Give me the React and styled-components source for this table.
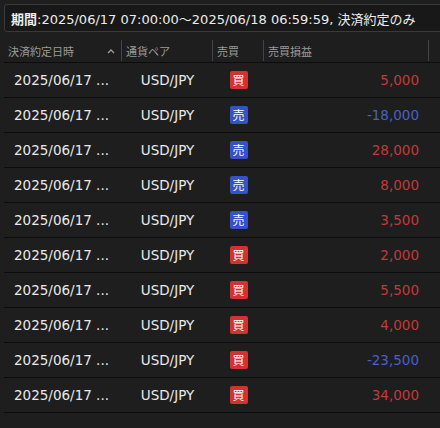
import React from "react";
import styled, { createGlobalStyle } from "styled-components";

const Global = createGlobalStyle`
  html, body { margin: 0; padding: 0; background: #1e1e1e; }
  body { font-family: "DejaVu Sans", "Noto Sans CJK JP", sans-serif; overflow: hidden; }
`;

const Page = styled.div`
  width: 440px;
  height: 428px;
  background: #1e1e1e;
  padding: 4px 0 0 4px;
  box-sizing: border-box;
  overflow: hidden;
`;

const FilterBox = styled.div`
  width: 446px;
  height: 28px;
  box-sizing: border-box;
  border: 1px solid #3a3a3a;
  border-radius: 3px;
  background: #181818;
  color: #ececec;
  font-size: 13px;
  display: flex;
  align-items: center;
  padding-left: 6px;
  white-space: nowrap;
`;

const Label = styled.span`
  font-weight: 700;
  font-family: "Noto Sans CJK JP", sans-serif;
`;

const Table = styled.div`
  margin-top: 7px;
  width: 446px;
  display: flex;
  flex-direction: column;
`;

const cols = "118px 91px 51px 165px 1fr";

const HeaderRow = styled.div`
  display: grid;
  grid-template-columns: ${cols};
  height: 23px;
  border-bottom: 1px solid #0c0c0c;
  align-items: center;
`;

const HeadCell = styled.div`
  height: 21px;
  display: flex;
  align-items: center;
  justify-content: space-between;
  padding: 0 6px 0 4px;
  color: #9b9b9b;
  font-size: 11px;
  font-family: "Noto Sans CJK JP", sans-serif;
  border-right: ${(p) => (p.$last ? "none" : "1px solid #444")};
`;

const SortArrow = styled.svg`
  width: 8px;
  height: 6px;
`;

const Row = styled.div`
  display: grid;
  grid-template-columns: ${cols};
  height: 34px;
  border-bottom: 1px solid #0c0c0c;
  align-items: center;
  color: #e8e8e8;
  font-size: 13.5px;
`;

const Cell = styled.div`
  display: flex;
  align-items: center;
  justify-content: ${(p) => p.$align || "center"};
  padding: ${(p) => p.$pad || "0"};
  white-space: nowrap;
  overflow: hidden;
`;

const Badge = styled.span`
  width: 18px;
  height: 18px;
  border-radius: 2px;
  background: ${(p) => (p.$sell ? "#3552c9" : "#d23330")};
  color: #fff;
  font-size: 12px;
  font-family: "Noto Sans CJK JP", sans-serif;
  display: inline-flex;
  align-items: center;
  justify-content: center;
  line-height: 1;
`;

const Amount = styled.span`
  color: ${(p) => (p.$neg ? "#4a60c4" : "#c23a3a")};
`;

const rows = [
  ["買", "5,000"],
  ["売", "-18,000"],
  ["売", "28,000"],
  ["売", "8,000"],
  ["売", "3,500"],
  ["買", "2,000"],
  ["買", "5,500"],
  ["買", "4,000"],
  ["買", "-23,500"],
  ["買", "34,000"],
];

export default function App() {
  return (
    <>
      <Global />
      <Page>
        <FilterBox>
          <span>
            <Label>期間</Label>
            :2025/06/17 07:00:00～2025/06/18 06:59:59, 決済約定のみ
          </span>
        </FilterBox>
        <Table>
          <HeaderRow>
            <HeadCell>
              決済約定日時
              <SortArrow viewBox="0 0 8 6">
                <path d="M1 5 L4 2 L7 5" fill="none" stroke="#9b9b9b" strokeWidth="1.4" />
              </SortArrow>
            </HeadCell>
            <HeadCell>通貨ペア</HeadCell>
            <HeadCell>売買</HeadCell>
            <HeadCell>売買損益</HeadCell>
            <HeadCell $last />
          </HeaderRow>
          {rows.map(([side, amt], i) => (
            <Row key={i}>
              <Cell $align="flex-start" $pad="0 0 0 10px">2025/06/17 ...</Cell>
              <Cell>USD/JPY</Cell>
              <Cell>
                <Badge $sell={side === "売"}>{side}</Badge>
              </Cell>
              <Cell $align="flex-end" $pad="0 10px 0 0">
                <Amount $neg={amt.startsWith("-")}>{amt}</Amount>
              </Cell>
              <Cell />
            </Row>
          ))}
        </Table>
      </Page>
    </>
  );
}
